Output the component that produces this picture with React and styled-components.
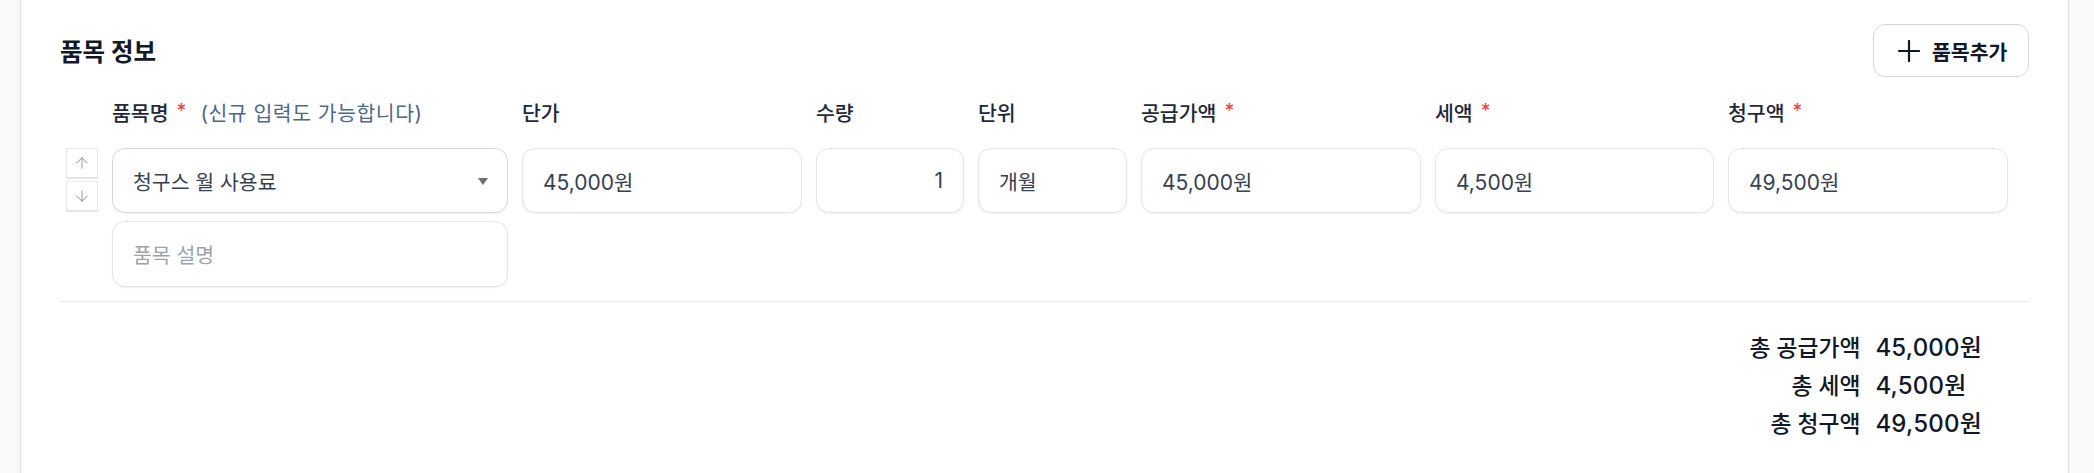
import React from 'react';
import styled, { createGlobalStyle } from 'styled-components';
import { ArrowUp, ArrowDown } from 'lucide-react';

const GlobalStyle = createGlobalStyle`
  html, body {
    margin: 0;
    padding: 0;
    background: #f8f9fb;
    font-family: Inter, "Noto Sans CJK KR", "Noto Sans", sans-serif;
    color: #111827;
  }
  * { box-sizing: border-box; }
`;

const Page = styled.div`
  min-height: 100vh;
  padding: 0 25px 0 20px;
`;

const Card = styled.section`
  min-height: 100vh;
  background: #ffffff;
  border-left: 1px solid #d9dce3;
  border-right: 1px solid #d9dce3;
  padding: 24px 39px 30px 39px;
`;

const Header = styled.div`
  display: flex;
  align-items: center;
  justify-content: space-between;
  height: 53px;
`;

const Title = styled.h2`
  margin: 0;
  font-size: 24.5px;
  font-weight: 700;
  color: #111827;
`;

const AddButton = styled.button`
  display: flex;
  align-items: center;
  gap: 12px;
  height: 53px;
  width: 156px;
  padding: 0 0 0 24px;
  border: 1px solid #d5d8df;
  border-radius: 12px;
  background: #ffffff;
  font-family: inherit;
  font-size: 20.5px;
  font-weight: 600;
  color: #111827;
`;

const ItemGrid = styled.div`
  display: grid;
  grid-template-columns: 38px 396px 280px 148px 149px 280px 279px 280px;
  column-gap: 14px;
  row-gap: 24px;
  margin-top: 23px;
  padding-bottom: 14px;
  border-bottom: 1px solid #e5e7eb;
`;

const Label = styled.div`
  display: flex;
  align-items: center;
  height: 24px;
  font-size: 20.5px;
  font-weight: 500;
  color: #1f2937;
  white-space: nowrap;
`;

const Required = styled.span`
  color: #ef4444;
  margin-left: 8px;
  font-size: 19px;
  align-self: flex-start;
  line-height: 22px;
`;

const Hint = styled.span`
  margin-left: 14px;
  color: #4f6788;
  font-weight: 400;
  letter-spacing: 0.5px;
`;

const Mover = styled.div`
  justify-self: end;
  display: flex;
  flex-direction: column;
  gap: 2px;
  width: 32px;
`;

const MoveButton = styled.button`
  display: flex;
  align-items: center;
  justify-content: center;
  width: 32px;
  height: 31px;
  padding: 0;
  border: 1px solid #e6e8ec;
  border-bottom: 2px solid #e4e5e9;
  background: #ffffff;
  color: #9a9ea6;
`;

const Stack = styled.div`
  display: flex;
  flex-direction: column;
  gap: 8px;
`;

const Field = styled.div`
  position: relative;
  display: flex;
  align-items: center;
  justify-content: ${p => (p.$right ? 'flex-end' : 'flex-start')};
  height: ${p => (p.$tall ? 66 : 65)}px;
  padding: 0 20px;
  border: 1px solid ${p => (p.$strong ? '#d3d7df' : '#e3e5ea')};
  border-radius: 13px;
  background: #ffffff;
  box-shadow: 0 1px 2px rgba(16, 24, 40, 0.06);
  font-size: ${p => (p.$numeric ? 21 : 20.5)}px;
  color: ${p => (p.$placeholder ? '#9ca3af' : '#374151')};
`;

const Caret = styled.span`
  position: absolute;
  right: 19px;
  top: 50%;
  margin-top: -3px;
  width: 0;
  height: 0;
  border-left: 5.5px solid transparent;
  border-right: 5.5px solid transparent;
  border-top: 7px solid #6e6e78;
`;

const Totals = styled.div`
  display: grid;
  grid-template-columns: auto auto;
  column-gap: 15px;
  align-items: baseline;
  justify-content: end;
  margin: 27px 47px 0 0;
  font-weight: 500;
  line-height: 38px;
  color: #111827;
`;

const TotalLabel = styled.div`
  text-align: right;
  font-size: 22.8px;
`;

const TotalValue = styled.div`
  text-align: left;
  min-width: 105px;
  font-size: 24px;
  letter-spacing: 0.2px;
`;

const PlusIcon = () => (
  <svg width="22" height="22" viewBox="0 0 22 22" fill="none" stroke="#111827" strokeWidth="2.2" strokeLinecap="round">
    <path d="M11 1v20M1 11h20" />
  </svg>
);

const columns = [
  { label: '단가' },
  { label: '수량' },
  { label: '단위' },
  { label: '공급가액', required: true },
  { label: '세액', required: true },
  { label: '청구액', required: true },
];

const values = [
  { text: '45,000원', numeric: true },
  { text: '1', numeric: true, right: true },
  { text: '개월' },
  { text: '45,000원', numeric: true },
  { text: '4,500원', numeric: true },
  { text: '49,500원', numeric: true },
];

const totals = [
  [ '총 공급가액', '45,000원' ],
  [ '총 세액', '4,500원' ],
  [ '총 청구액', '49,500원' ],
];

export default function App() {
  return (
    <>
      <GlobalStyle />
      <Page>
        <Card>
          <Header>
            <Title>품목 정보</Title>
            <AddButton type="button">
              <PlusIcon />
              품목추가
            </AddButton>
          </Header>

          <ItemGrid>
            <div />
            <Label>
              품목명<Required>*</Required>
              <Hint>(신규 입력도 가능합니다)</Hint>
            </Label>
            {columns.map(col => (
              <Label key={col.label}>
                {col.label}
                {col.required && <Required>*</Required>}
              </Label>
            ))}

            <Mover>
              <MoveButton type="button"><ArrowUp size={18} strokeWidth={1.4} /></MoveButton>
              <MoveButton type="button"><ArrowDown size={18} strokeWidth={1.4} /></MoveButton>
            </Mover>
            <Stack>
              <Field $strong>
                청구스 월 사용료
                <Caret />
              </Field>
              <Field $tall $placeholder>품목 설명</Field>
            </Stack>
            {values.map((v, i) => (
              <Field key={i} $right={v.right} $numeric={v.numeric}>{v.text}</Field>
            ))}
          </ItemGrid>

          <Totals>
            {totals.map(([ label, value ]) => (
              <React.Fragment key={label}>
                <TotalLabel>{label}</TotalLabel>
                <TotalValue>{value}</TotalValue>
              </React.Fragment>
            ))}
          </Totals>
        </Card>
      </Page>
    </>
  );
}
